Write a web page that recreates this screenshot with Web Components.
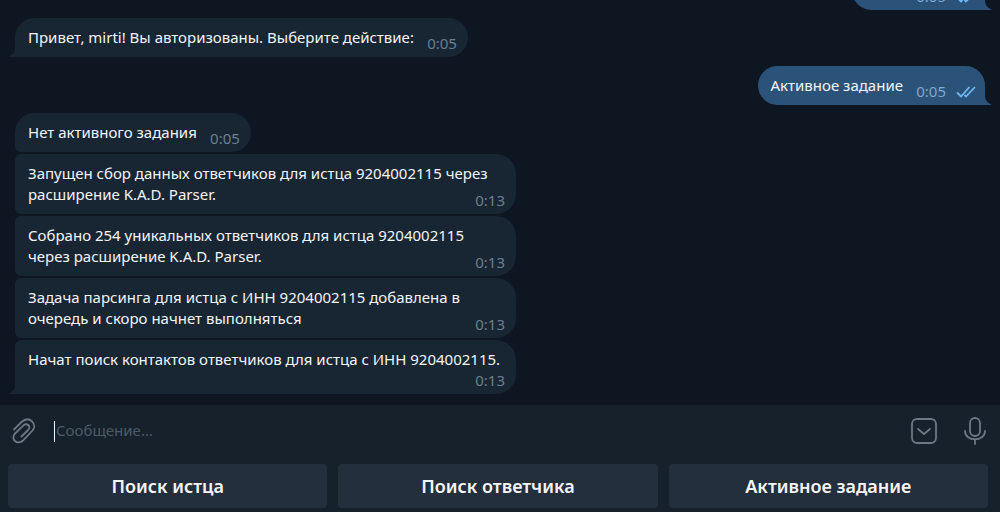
<!DOCTYPE html>
<html lang="ru">
<head>
<meta charset="utf-8">
<title>Чат</title>
<style>
  html, body { height: 100%; }
  body { margin: 0; background: #0e1621; color: #f2f5f7; font: 15px/21px "Noto Sans", "Open Sans", sans-serif; }
</style>
</head>
<body>
<chat-app>
  <chat-message out time="0:05">/start</chat-message>
  <chat-message tail time="0:05">Привет, mirti! Вы авторизованы. Выберите действие:</chat-message>
  <chat-message out time="0:05">Активное задание</chat-message>
  <chat-message joined time="0:05">Нет активного задания</chat-message>
  <chat-message joined follow wide time="0:13">Запущен сбор данных ответчиков для истца 9204002115 через расширение K.A.D. Parser.</chat-message>
  <chat-message joined follow wide time="0:13">Собрано 254 уникальных ответчиков для истца 9204002115 через расширение K.A.D. Parser.</chat-message>
  <chat-message joined follow wide time="0:13">Задача парсинга для истца с ИНН 9204002115 добавлена в очередь и скоро начнет выполняться</chat-message>
  <chat-message follow tail wide below time="0:13">Начат поиск контактов ответчиков для истца с ИНН 9204002115.</chat-message>
  <chat-composer slot="footer"></chat-composer>
  <reply-keyboard slot="footer">
    <reply-button>Поиск истца</reply-button>
    <reply-button>Поиск ответчика</reply-button>
    <reply-button>Активное задание</reply-button>
  </reply-keyboard>
</chat-app>
<script>
const define = (name, html, setup) => {
  const template = document.createElement('template');
  template.innerHTML = html;
  customElements.define(name, class extends HTMLElement {
    constructor() {
      super();
      this.attachShadow({ mode: 'open' }).append(template.content.cloneNode(true));
    }
    connectedCallback() { if (setup) setup(this, this.shadowRoot); }
  });
};

define('chat-app', `
  <style>
    :host { display: flex; flex-direction: column; height: 100vh; overflow: hidden; }
    main { flex: 1; min-height: 0; overflow: hidden; display: flex; flex-direction: column; justify-content: flex-end; padding: 0 15px 11px; }
    footer { background: #17212b; padding-bottom: 4px; }
  </style>
  <main><slot></slot></main>
  <footer><slot name="footer"></slot></footer>`);

define('chat-message', `
  <style>
    :host { display: block; flex: none; position: relative; box-sizing: border-box; align-self: flex-start;
      max-width: 501px; margin-top: 8px; padding: 9px 54px 9px 13px; background: #182533; border-radius: 20px; }
    :host([follow]) { margin-top: 2px; border-top-left-radius: 6px; }
    :host([joined]) { border-bottom-left-radius: 6px; }
    :host([tail]) { border-bottom-left-radius: 0; }
    :host([wide]) { width: 100%; padding-right: 13px; }
    :host([below]) { padding-bottom: 24px; }
    :host([out]) { align-self: flex-end; margin-top: 9px; background: #2b5278; border-bottom-right-radius: 0; padding-right: 82px; }
    .meta { position: absolute; right: 11px; bottom: 3px; display: flex; align-items: center; gap: 10px; color: #6d7f8f; }
    :host([wide]) .meta { bottom: 4px; line-height: 20px; }
    :host([out]) .meta { right: 9px; color: #7da8d3; }
    svg { display: none; fill: none; }
    .tail { position: absolute; bottom: 0; width: 7px; height: 9px; }
    :host([tail]) .tail { display: block; left: -7px; fill: #182533; }
    :host([out]) .tail { display: block; right: -7px; fill: #2b5278; transform: scaleX(-1); }
    :host([out]) .checks { display: block; stroke: #6cb8f5; stroke-width: 1.8; }
  </style>
  <slot></slot>
  <span class="meta"><time></time><svg class="checks" width="20" height="12" viewBox="0 0 20 12"><path d="M1 6.500l4 4L13.500 1M8.500 9l1.500 1.500L19 1"/></svg></span>
  <svg class="tail" viewBox="0 0 7 9"><path d="M7 0Q7 6 0 9H7Z"/></svg>`,
  (host, root) => { root.querySelector('time').textContent = host.getAttribute('time'); });

define('chat-composer', `
  <style>
    :host { display: flex; align-items: center; height: 59px; box-sizing: border-box; padding: 0 14px 7px 11px; }
    button { flex: none; border: 0; padding: 0; background: none; color: #6c7883; display: block; }
    svg { display: block; fill: none; stroke: currentColor; stroke-width: 1.8; stroke-linecap: round; stroke-linejoin: round; }
    label { flex: 1; display: flex; align-items: center; margin-left: 17px; border-left: 1px solid #f2f5f7; height: 21px; }
    input { flex: 1; min-width: 0; border: 0; outline: 0; padding: 0 0 2px 1px; background: none; color: inherit; font: inherit; }
    input::placeholder { color: #4c5a67; opacity: 1; }
    .mic { margin-left: 27px; }
  </style>
  <button aria-label="Прикрепить файл"><svg width="26" height="28" viewBox="0 0 26 28"><path d="M3 12.500L10.500 5C14.500 1.500 18.500 1.800 21 4.300S24 10.500 21.500 13.500L12 23.500C9.500 26 6 26 4 24S2 19 4 16.500L12.500 8.300C14 7 16 7 17.500 8.300S18.500 11.500 17 13L10.500 19.500"/></svg></button>
  <label><input placeholder="Сообщение..." aria-label="Сообщение"></label>
  <button aria-label="Клавиатура бота"><svg width="26" height="26" viewBox="0 0 26 26"><rect x="1" y="1" width="24" height="24" rx="5"/><path d="M7 11l6 5 6-5"/></svg></button>
  <button class="mic" aria-label="Голосовое сообщение"><svg width="22" height="28" viewBox="0 0 22 28"><rect x="6" y="1" width="10" height="18" rx="5"/><path d="M1 14c0 11 20 11 20 0M11 22.500V27"/></svg></button>`);

define('reply-keyboard', `
  <style>
    :host { display: grid; grid-auto-flow: column; grid-auto-columns: 1fr; gap: 11px; padding: 0 12px 0 8px; }
  </style>
  <slot></slot>`);

define('reply-button', `
  <style>
    :host { display: block; }
    button { display: block; width: 100%; height: 44px; border: 0; border-radius: 4px; padding: 0; background: #242f3d; color: #f5f5f5;
      font: 600 18px/24px "Noto Sans", "Open Sans", sans-serif; }
  </style>
  <button><slot></slot></button>`);
</script>
</body>
</html>
